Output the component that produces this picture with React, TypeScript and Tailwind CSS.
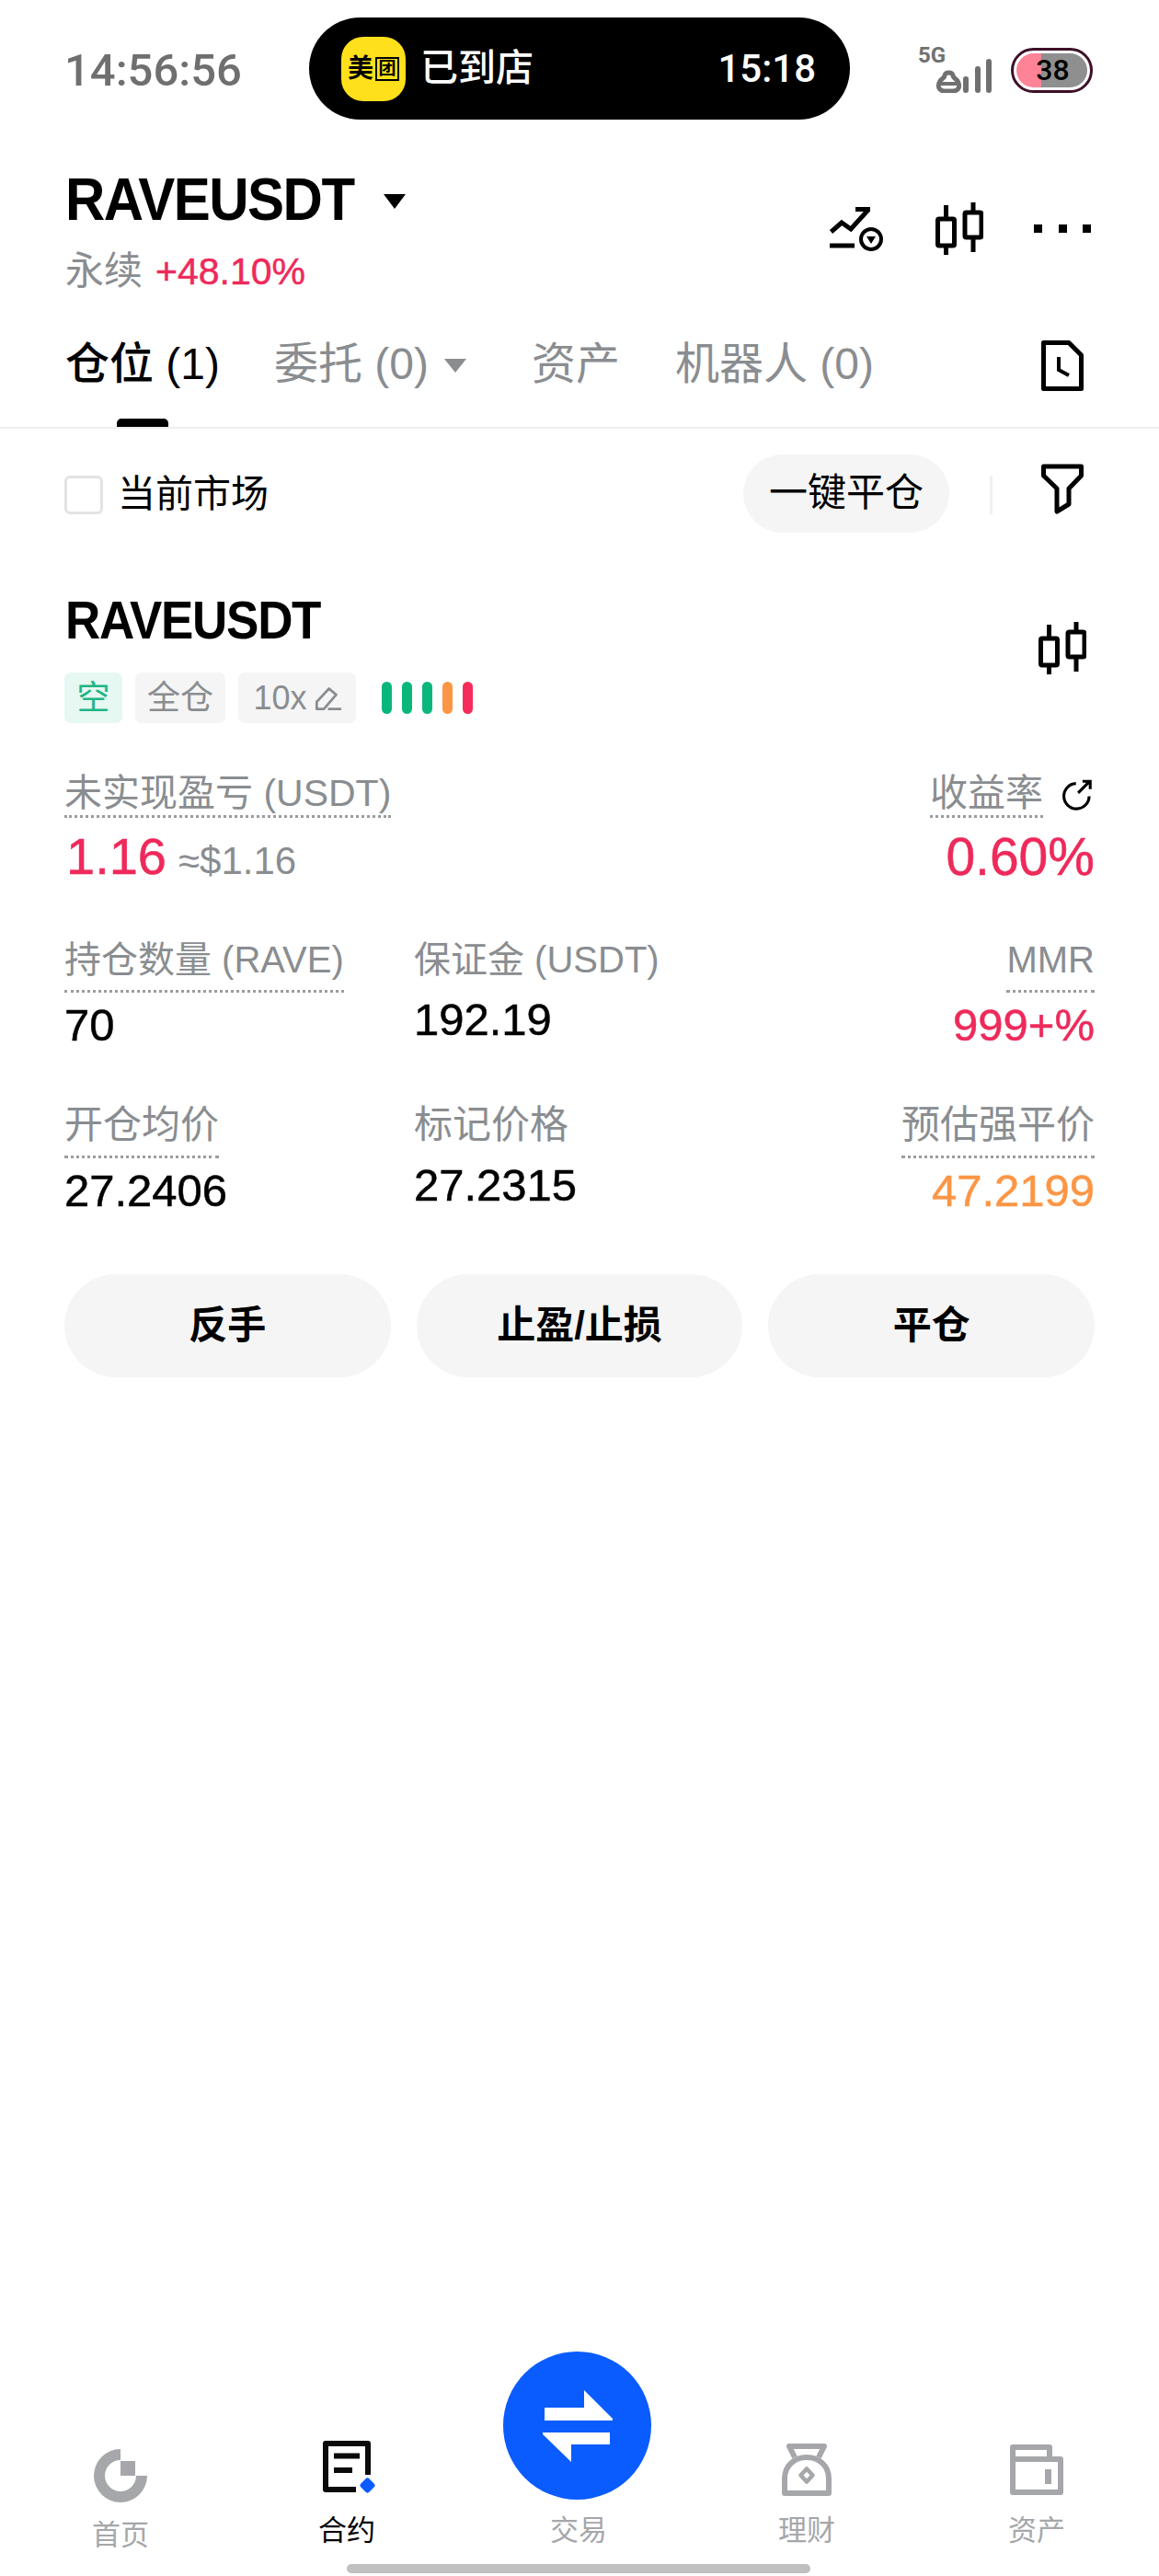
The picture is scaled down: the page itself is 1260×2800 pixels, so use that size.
const gray = "text-[#8a8d90]";
const heavier = "[-webkit-text-stroke:0.5px]";

function Candles({ className }: { className?: string }) {
  return (
    <svg viewBox="0 0 52 57" className={className} fill="none" stroke="#000" strokeWidth="5">
      <path d="M11.5 3V18M11.5 47V57M41 0V11M41 38V54" />
      <rect x="2.5" y="18" width="18" height="29" rx="1.5" />
      <rect x="32" y="11" width="18" height="27" rx="1.5" />
    </svg>
  );
}

function StatusBar() {
  return (
    <div className="mt-[19px] flex h-[111px] items-center">
      <div className="w-[336px] pl-[70px] pt-[3px] font-['Roboto',sans-serif] text-[49px] leading-none font-medium text-[#6f6f6f]">
        14:56:56
      </div>
      <div className="flex h-[111px] w-[588px] items-center rounded-full bg-black pl-[35px] pr-[37px]">
        <div className="flex h-[70px] w-[70px] items-center justify-center gap-[2px] rounded-[24px] bg-[#ffe01b] text-black">
          <span className="text-[28px] leading-none font-bold">美</span>
          <span className="flex h-[26px] w-[26px] items-center justify-center border-2 border-black text-[19px] leading-none font-bold">团</span>
        </div>
        <span className="ml-[16px] text-[41px] leading-none font-medium text-white">已到店</span>
        <span className="ml-auto font-['Roboto',sans-serif] text-[42px] leading-none font-medium text-white">15:18</span>
      </div>
      <div className="relative mt-[3px] ml-[74px] h-[50px] w-[81px]">
        <span className="absolute -top-[3px] left-0 font-['Roboto',sans-serif] text-[24px] leading-none font-bold text-[#707070]">5G</span>
        <svg viewBox="0 0 62 37" className="absolute top-[13px] left-[19px] h-[37px] w-[62px]" fill="none" stroke="#707070" strokeLinecap="round">
          <path strokeWidth="5" d="M5 24C2 29 3 35 10 35H19C26 35 27 29 24 24C22 21 19 21 19 18C18 14 11 14 10 18C10 21 7 21 5 24Z" />
          <path strokeWidth="4" d="M5 27H24" />
          <path strokeWidth="6" d="M33 22V34M46 11V34M58 3V34" />
        </svg>
      </div>
      <div className="relative mt-[3px] ml-[20px] h-[49px] w-[89px] rounded-full border-[3px] border-[#3d1027] p-[3px]">
        <div className="flex h-full w-full overflow-hidden rounded-full">
          <div className="w-[27px] bg-[#ff8396]" />
          <div className="flex-1 bg-[#8f8f8f]" />
        </div>
        <span className="absolute inset-0 flex items-center justify-center pl-[2px] font-['Roboto',sans-serif] text-[32px] leading-none font-medium text-black">38</span>
      </div>
    </div>
  );
}

function SymbolHeader() {
  return (
    <div className="flex h-[185px] pl-[71px] pr-[74px]">
      <div>
        <div className="mt-[53px] flex items-center">
          <span className="origin-center scale-y-[1.08] text-[60px] leading-[68px] font-bold tracking-[-1.5px] text-black">RAVEUSDT</span>
          <span className="mt-[4px] ml-[32px] h-0 w-0 border-x-[12px] border-t-[16px] border-x-transparent border-t-black" />
        </div>
        <div className="mt-[20px] flex items-center">
          <span className={`text-[42px] leading-[48px] ${gray}`}>永续</span>
          <span className={`ml-[14px] text-[41px] leading-[48px] text-[#ee2a5b] ${heavier}`}>+48.10%</span>
        </div>
      </div>
      <div className="ml-auto flex pt-[90px]">
        <svg viewBox="0 0 58 48" className="mt-[5px] h-[48px] w-[58px]" fill="none" stroke="#000">
          <path strokeWidth="5" d="M1.5 27L13 17L23 24L42 3M28 2.5H44M0 42H27" />
          <circle cx="45" cy="35" r="11" strokeWidth="4" />
          <path d="M40 32H50L45 40Z" fill="#000" stroke="none" />
        </svg>
        <Candles className="ml-[57px] h-[57px] w-[52px]" />
        <div className="ml-[55px] flex gap-[17.5px] pt-[24px]">
          <span className="h-[9px] w-[9px] bg-black" />
          <span className="h-[9px] w-[9px] bg-black" />
          <span className="h-[9px] w-[9px] bg-black" />
        </div>
      </div>
    </div>
  );
}

function Tabs() {
  return (
    <div className="flex h-[151px] items-start border-b-2 border-[#efefef] pl-[71px] pr-[82px]">
      <div className="relative h-[149px] w-[227px] pt-[53px] text-[48px] leading-[56px] font-medium text-black">
        仓位 (1)
        <span className="absolute bottom-0 left-[56px] h-[9px] w-[56px] rounded-t-[5px] bg-black" />
      </div>
      <div className={`flex w-[280px] items-center pt-[53px] text-[48px] leading-[56px] ${gray}`}>
        委托 (0)
        <span className="mt-[2px] ml-[17px] h-0 w-0 border-x-[12px] border-t-[15px] border-x-transparent border-t-[#8a8d90]" />
      </div>
      <div className={`w-[156px] pt-[53px] text-[48px] leading-[56px] ${gray}`}>资产</div>
      <div className={`pt-[53px] text-[48px] leading-[56px] ${gray}`}>机器人 (0)</div>
      <svg viewBox="0 0 46 55" className="mt-[55px] ml-auto h-[55px] w-[46px]" fill="none" stroke="#000" strokeWidth="5">
        <path d="M2.5 2.5H30L43.5 16V52.5H2.5Z" strokeLinejoin="round" />
        <path d="M19 18V32L30 38" strokeWidth="4" />
      </svg>
    </div>
  );
}

function FilterRow() {
  return (
    <div className="flex h-[140px] items-center pl-[70px] pr-[82px]">
      <span className="mt-[4px] h-[42px] w-[42px] rounded-[6px] border-[3px] border-[#e2e3e4]" />
      <span className="mt-[2px] ml-[16px] text-[41px] leading-none text-black">当前市场</span>
      <div className="ml-auto flex h-[85px] w-[224px] items-center justify-center rounded-full bg-[#f5f5f5] text-[42px] leading-none text-black">
        一键平仓
      </div>
      <span className="mt-[4px] ml-[44px] h-[42px] w-[3px] bg-[#f0f0f0]" />
      <svg viewBox="0 0 46 55" className="mt-[-10px] ml-[53px] h-[55px] w-[46px]" fill="none" stroke="#000" strokeWidth="5" strokeLinejoin="round">
        <path d="M2.5 3H43.5V13L30 27V44L17 52V27L2.5 13Z" />
      </svg>
    </div>
  );
}

function Tag({ children, className }: { children: React.ReactNode; className: string }) {
  return (
    <div className={`flex h-[55px] items-center justify-center rounded-[7px] text-[36px] leading-none ${className}`}>
      {children}
    </div>
  );
}

function Metric({
  label,
  value,
  dotted,
  right,
  labelSize = "text-[40px]",
  color = "text-black",
}: {
  label: string;
  value: string;
  dotted?: boolean;
  right?: boolean;
  labelSize?: string;
  color?: string;
}) {
  return (
    <div className={`flex flex-col ${right ? "items-end" : "items-start"}`}>
      <div className={`leading-[48px] ${labelSize} ${gray} ${dotted ? "border-b-[3px] border-dotted border-[#9a9c9f] pb-[9px]" : "pb-[6px]"}`}>
        {label}
      </div>
      <div className={`mt-[7px] text-[49px] leading-[56px] ${heavier} ${color}`}>{value}</div>
    </div>
  );
}

function PositionCard() {
  return (
    <div className="pl-[70px] pr-[70px]">
      <div className="flex h-[125px] pt-[40px]">
        <span className="origin-center scale-y-[1.07] pl-[1px] text-[53px] leading-[60px] font-bold tracking-[-1.3px] text-black">RAVEUSDT</span>
        <Candles className="mt-[30px] mr-[9px] ml-auto h-[57px] w-[52px]" />
      </div>

      <div className="flex items-center">
        <Tag className="w-[63px] bg-[#e6f8f1] text-[#1fb585]">空</Tag>
        <Tag className={`ml-[14px] w-[98px] bg-[#f5f5f5] ${gray}`}>全仓</Tag>
        <Tag className={`ml-[14px] w-[128px] bg-[#f5f5f5] ${gray}`}>
          10x
          <svg viewBox="0 0 27 25" className="ml-[7px] h-[28px] w-[30px]" fill="none" stroke="#8a8d90" strokeWidth="2.5">
            <path d="M3 16L15 3L22 9L10 23H3ZM14 23H27" strokeLinejoin="round" />
          </svg>
        </Tag>
        <div className="ml-[28px] flex gap-[11px]">
          <span className="h-[35px] w-[11px] rounded-full bg-[#0ab77b]" />
          <span className="h-[35px] w-[11px] rounded-full bg-[#0ab77b]" />
          <span className="h-[35px] w-[11px] rounded-full bg-[#0ab77b]" />
          <span className="h-[35px] w-[11px] rounded-full bg-[#fb9646]" />
          <span className="h-[35px] w-[11px] rounded-full bg-[#f52c5b]" />
        </div>
      </div>

      {/* profit row, larger figures than the rest of the card */}
      <div className="mt-[52px] flex justify-between">
        <div>
          <div className={`w-fit border-b-[3px] border-dotted border-[#9a9c9f] text-[41px] leading-[48px] ${gray}`}>
            未实现盈亏 (USDT)
          </div>
          <div className="mt-[10px] flex items-baseline">
            <span className={`pl-[2px] text-[56px] leading-[64px] text-[#ee2a5b] ${heavier}`}>1.16</span>
            <span className={`ml-[13px] text-[42px] leading-[64px] ${gray}`}>≈$1.16</span>
          </div>
        </div>
        <div className="flex flex-col items-end">
          <div className="flex items-start">
            <div className={`border-b-[3px] border-dotted border-[#9a9c9f] text-[41px] leading-[48px] ${gray}`}>收益率</div>
            <svg viewBox="0 0 31 30" className="mt-[7px] ml-[19px] h-[36px] w-[37px]" fill="none" stroke="#000" strokeWidth="2.6">
              <path d="M26 17A11.5 11.5 0 1 1 14 5.5M16 14L26 4M20 3.5H27V10.5" />
            </svg>
          </div>
          <div className={`mt-[10px] text-[57px] leading-[64px] text-[#ee2a5b] ${heavier}`}>0.60%</div>
        </div>
      </div>

      <div className="mt-[51px] grid grid-cols-[380px_1fr_auto]">
        <Metric label="持仓数量 (RAVE)" value="70" dotted />
        <Metric label="保证金 (USDT)" value="192.19" />
        <Metric label="MMR" value="999+%" dotted right color="text-[#ee2a5b]" />
      </div>
      <div className="mt-[57px] grid grid-cols-[380px_1fr_auto]">
        <Metric label="开仓均价" labelSize="text-[42px]" value="27.2406" dotted />
        <Metric label="标记价格" labelSize="text-[42px]" value="27.2315" />
        <Metric label="预估强平价" labelSize="text-[42px]" value="47.2199" dotted right color="text-[#fb9646]" />
      </div>

      <div className="mt-[63px] grid grid-cols-3 gap-[28px]">
        {["反手", "止盈/止损", "平仓"].map((text) => (
          <div key={text} className="flex h-[112px] items-center justify-center rounded-full bg-[#f5f5f5] text-[42px] leading-none font-bold text-black">
            {text}
          </div>
        ))}
      </div>
    </div>
  );
}

function NavItem({
  label,
  icon,
  active,
  className = "",
}: {
  label: string;
  icon: React.ReactNode;
  active?: boolean;
  className?: string;
}) {
  return (
    <div className={`flex flex-col items-center ${className}`}>
      {icon}
      <span className={`text-[31px] leading-[40px] ${active ? "text-black" : "text-[#a5a7aa]"}`}>{label}</span>
    </div>
  );
}

function BottomNav() {
  return (
    <div className="mt-auto flex flex-col">
      <div className="grid grid-cols-[250px_242px_262px_234px_272px] items-end pl-[6px]">
        <NavItem
          className="mb-[-5px]"
          label="首页"
          icon={
            <svg viewBox="0 0 58 58" className="mb-[16px] h-[58px] w-[58px]" fill="#a5a7aa">
              <path d="M29 0A29 29 0 1 0 58 29H46A17 17 0 1 1 29 12Z" />
              <rect x="29" y="13" width="16" height="16" />
            </svg>
          }
        />
        <NavItem
          active
          label="合约"
          icon={
            <svg viewBox="0 0 58 59" className="mb-[19px] ml-[6px] h-[59px] w-[58px]" fill="none" stroke="#0b0b0b" strokeWidth="6">
              <path d="M49 37V3H3V53H36" strokeLinejoin="round" />
              <path d="M12 16.5H40M12 32H32" />
              <rect x="42" y="42" width="13" height="13" rx="3" transform="rotate(45 48.5 48.5)" fill="#0a5cff" stroke="none" />
            </svg>
          }
        />
        <NavItem
          label="交易"
          icon={
            <svg viewBox="0 0 161 161" className="mr-[3px] mb-[14px] h-[161px] w-[161px]">
              <circle cx="80.5" cy="80.5" r="80.5" fill="#0a5cff" />
              <path d="M45 61H88V42L119 73V75H45Z M116 88V101H74V120L43 90V88Z" fill="#fff" />
            </svg>
          }
        />
        <NavItem
          label="理财"
          icon={
            <svg viewBox="0 0 54 57" className="mb-[18px] h-[57px] w-[54px]" fill="none" stroke="#a5a7aa" strokeWidth="6" strokeLinejoin="round">
              <path d="M3 54V38C3 24 14 15 27 15C40 15 51 24 51 38V54Z" />
              <path d="M14 15L8 3H46L40 15" />
              <path d="M27 27.5L33.5 34.5L27 41.5L20.5 34.5Z" strokeWidth="4.5" />
            </svg>
          }
        />
        <NavItem
          className="mr-[6px]"
          label="资产"
          icon={
            <svg viewBox="0 0 58 55" className="mb-[19px] h-[55px] w-[58px]" fill="none" stroke="#a5a7aa" strokeWidth="6" strokeLinejoin="round">
              <path d="M3 3H43V16H55V52H3ZM3 16H43" />
              <path d="M41.5 27V43" strokeWidth="7" />
            </svg>
          }
        />
      </div>
      <div className="mt-[16px] mb-[3px] ml-[377px] h-[10px] w-[504px] rounded-full bg-[#c0c0c0]" />
    </div>
  );
}

export default function App() {
  return (
    <div className="flex h-[2800px] w-[1260px] flex-col overflow-hidden bg-white font-['Liberation_Sans','Noto_Sans_CJK_SC',sans-serif]">
      <StatusBar />
      <SymbolHeader />
      <Tabs />
      <FilterRow />
      <PositionCard />
      <BottomNav />
    </div>
  );
}
